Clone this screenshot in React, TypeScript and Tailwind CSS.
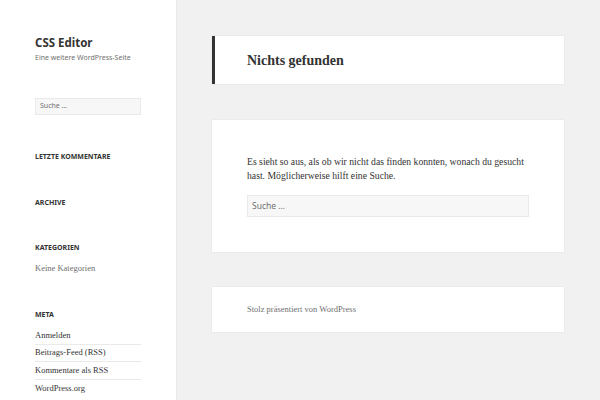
import React from "react";

const sans = { fontFamily: '"Noto Sans", "Open Sans", sans-serif' };
const serif = { fontFamily: '"Liberation Serif", "DejaVu Serif", serif' };

function WidgetTitle({ children }: { children: React.ReactNode }) {
  return (
    <h2 className="text-[7px] font-bold uppercase text-[#333] leading-none" style={sans}>
      {children}
    </h2>
  );
}

export default function App() {
  return (
    <div className="flex w-[600px] h-[400px] overflow-hidden bg-[#f1f1f1]">
      <aside className="w-[176px] shrink-0 h-full bg-white shadow-[0_0_1px_rgba(0,0,0,0.15)] pl-[35px] pr-[35px]">
        <div className="pt-[35px]">
          <h1 className="text-[11.5px] font-bold text-[#333] leading-[15px]" style={sans}>CSS Editor</h1>
          <p className="mt-[2px] text-[7px] text-[#707070] leading-[12px]" style={sans}>Eine weitere WordPress-Seite</p>
        </div>
        <div className="mt-[34px] h-[17px] w-[106px] bg-[#f7f7f7] border border-[#eaeaea] flex items-center pl-[4px] text-[7px] text-[#707070]" style={sans}>
          Suche …
        </div>
        <div className="mt-[38px]"><WidgetTitle>Letzte Kommentare</WidgetTitle></div>
        <div className="mt-[39px]"><WidgetTitle>Archive</WidgetTitle></div>
        <div className="mt-[38px]"><WidgetTitle>Kategorien</WidgetTitle></div>
        <p className="mt-[11px] text-[8.5px] text-[#707070] leading-[12px]" style={serif}>Keine Kategorien</p>
        <div className="mt-[37px]"><WidgetTitle>Meta</WidgetTitle></div>
        <ul className="mt-[9px] w-[106px] text-[8.5px] text-[#333]" style={serif}>
          <li className="h-[17.5px] flex items-center border-b border-[#eaeaea]">Anmelden</li>
          <li className="h-[17.5px] flex items-center border-b border-[#eaeaea]">Beitrags-Feed (RSS)</li>
          <li className="h-[17.5px] flex items-center border-b border-[#eaeaea]">Kommentare als RSS</li>
          <li className="h-[17.5px] flex items-center">WordPress.org</li>
        </ul>
      </aside>
      <main className="flex-1 pl-[36px] pr-[36px] pt-[36px]">
        <div className="h-[48px] bg-white border-l-[3px] border-[#333] shadow-[0_0_1px_rgba(0,0,0,0.15)] flex items-center pl-[32px]">
          <h1 className="text-[14px] font-bold text-[#333]" style={serif}>Nichts gefunden</h1>
        </div>
        <div className="mt-[36px] h-[132px] bg-white shadow-[0_0_1px_rgba(0,0,0,0.15)] pl-[35px] pr-[35px] pt-[35px]">
          <p className="text-[9.7px] leading-[14px] text-[#333]" style={serif}>
            Es sieht so aus, als ob wir nicht das finden konnten, wonach du gesucht hast. Möglicherweise hilft eine Suche.
          </p>
          <div className="mt-[12px] h-[22px] bg-[#f7f7f7] border border-[#eaeaea] flex items-center pl-[4px] text-[8.5px] text-[#707070]" style={sans}>
            Suche …
          </div>
        </div>
        <div className="mt-[35px] h-[45px] bg-white shadow-[0_0_1px_rgba(0,0,0,0.15)] flex items-center pl-[35px]">
          <p className="text-[8.5px] text-[#707070]" style={serif}>Stolz präsentiert von WordPress</p>
        </div>
      </main>
    </div>
  );
}
